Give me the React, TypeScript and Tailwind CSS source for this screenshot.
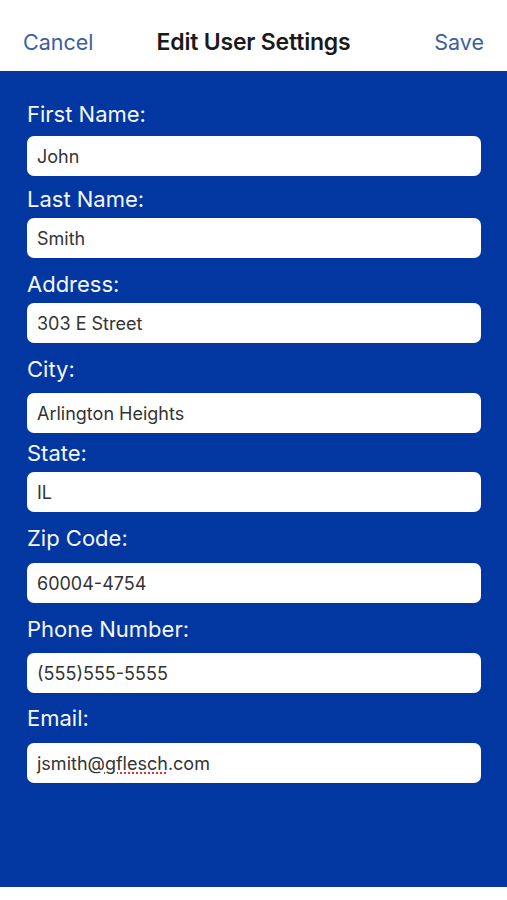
import React from 'react';

type Field = {
  label: string;
  value: React.ReactNode;
  labelGap: string;
  inputGap: string;
};

const fields: Field[] = [
  { label: 'First Name:', value: 'John', labelGap: 'mt-[30px]', inputGap: 'mt-[9px]' },
  { label: 'Last Name:', value: 'Smith', labelGap: 'mt-[10px]', inputGap: 'mt-[6px]' },
  { label: 'Address:', value: '303 E Street', labelGap: 'mt-[13px]', inputGap: 'mt-[6px]' },
  { label: 'City:', value: 'Arlington Heights', labelGap: 'mt-[13px]', inputGap: 'mt-[11px]' },
  { label: 'State:', value: 'IL', labelGap: 'mt-[7px]', inputGap: 'mt-[6px]' },
  { label: 'Zip Code:', value: '60004-4754', labelGap: 'mt-[13px]', inputGap: 'mt-[12px]' },
  { label: 'Phone Number:', value: '(555)555-5555', labelGap: 'mt-[13px]', inputGap: 'mt-[11px]' },
  {
    label: 'Email:',
    value: (
      <>
        jsmith@
        <span className="underline decoration-dotted decoration-[#d33] decoration-2 underline-offset-[3px]">gflesch</span>
        .com
      </>
    ),
    labelGap: 'mt-[12px]',
    inputGap: 'mt-[12px]',
  },
];

const App: React.FC = () => {
  return (
    <div className="w-[507px] h-[900px] bg-white font-['Inter',sans-serif] overflow-hidden">
      <header className="h-[71px] flex items-center px-[23px] pt-[13px]">
        <div className="flex-1 flex justify-start">
          <button className="text-[21.5px] text-[#3c5f9f]">Cancel</button>
        </div>
        <h1 className="text-[23px] font-semibold text-[#1a1a1a] tracking-[-0.2px]">Edit User Settings</h1>
        <div className="flex-1 flex justify-end">
          <button className="text-[21.5px] text-[#3c5f9f]">Save</button>
        </div>
      </header>

      <main className="h-[816px] bg-[#0237a1] px-[27px] pr-[26px] flex flex-col">
        {fields.map((f) => (
          <div key={f.label} className="flex flex-col">
            <label className={`${f.labelGap} text-[22px] leading-[26px] text-[#f5f6fa]`}>{f.label}</label>
            <div
              className={`${f.inputGap} h-[40px] rounded-[7px] bg-white px-[10px] flex items-center text-[18px] text-[#333]`}
            >
              {f.value}
            </div>
          </div>
        ))}
      </main>
    </div>
  );
};

export default App;
